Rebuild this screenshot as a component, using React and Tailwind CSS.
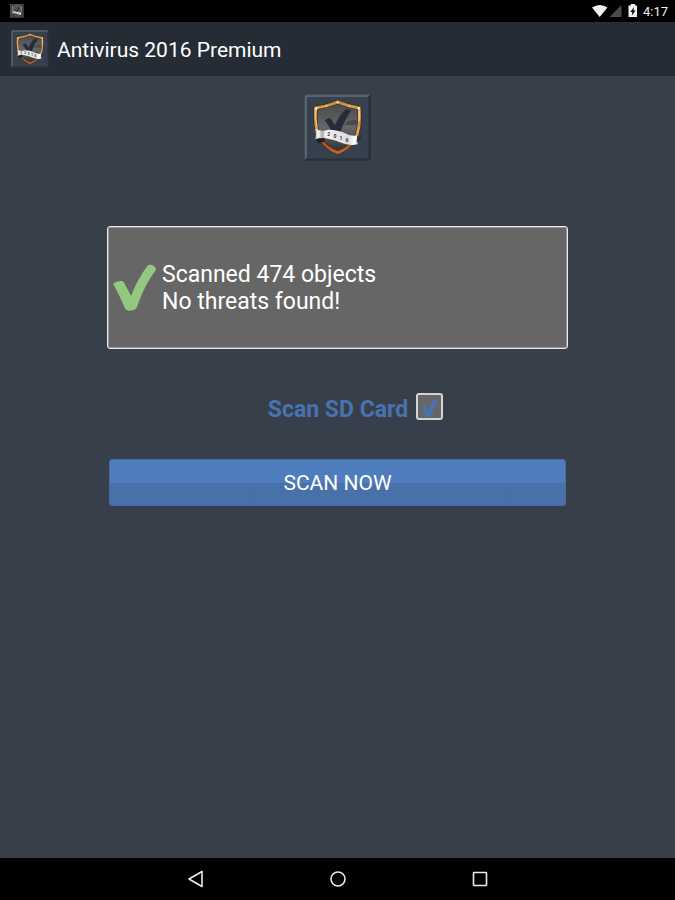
import { useState } from 'react';

export default function App() {
  const [scanSdCard, setScanSdCard] = useState(true);
  const scannedObjects = 474;

  return (
    <div className="flex min-h-screen flex-col bg-[#373f4b] font-[Roboto,sans-serif] text-white">
      <StatusBar />

      {/* Action bar */}
      <header className="flex h-[54px] items-center gap-2 bg-[#252c35] pl-[11px]">
        <AppLogo className="size-[38px]" />
        <h1 className="pt-[2px] text-[21px] leading-6">Antivirus 2016 Premium</h1>
      </header>

      <main className="flex flex-1 flex-col items-center px-[107px] pt-[18px]">
        <AppLogo className="size-[67px]" />

        {/* Last scan result */}
        <section className="mt-[65px] flex h-[123px] w-full items-center gap-[6px] rounded-[3px] border border-[#ebebed] bg-[#666666] pl-[5px] inset-ring inset-ring-white/30">
          <ResultCheck />
          <p className="text-[23px] leading-[27px]">
            Scanned {scannedObjects} objects
            <br />
            No threats found!
          </p>
        </section>

        <div className="mt-11 flex w-full items-start justify-center gap-2 pl-9">
          <label htmlFor="scan-sd" className="pt-[3px] text-[23px] font-bold leading-[27px] text-[#4872b0]">
            Scan SD Card
          </label>
          <span className="relative size-[27px]">
            <input
              id="scan-sd"
              type="checkbox"
              checked={scanSdCard}
              onChange={(e) => setScanSdCard(e.target.checked)}
              className="block size-full appearance-none rounded-[3px] border-2 border-[#d4d4d4] bg-[#666666]"
            />
            {scanSdCard && (
              <svg viewBox="0 0 27 27" className="pointer-events-none absolute inset-0 size-full">
                <path
                  d="M5.4 14.4Q7.4 12.4 9.8 13.4L12.2 18Q14.6 11 18 6.6Q20 5.8 22.2 7.6Q17.8 14.5 15.2 22.6Q14.4 24.6 10.4 24Q8 18.6 5.4 14.4Z"
                  fill="#4872b0"
                />
              </svg>
            )}
          </span>
        </div>

        <div className="mt-9 w-full px-[2px]">
          <button
            type="button"
            className="block h-[47px] w-full rounded-[3px] border border-[#456ca5] bg-linear-to-b from-[#4e7cbc] from-52% to-[#4871aa] to-52% text-[21px] leading-6"
          >
            SCAN NOW
          </button>
        </div>
      </main>

      <NavigationBar />
    </div>
  );
}

function StatusBar() {
  return (
    <div className="flex h-[22px] items-center justify-between bg-black pl-[10px] pr-[7px]">
      <AppLogo className="size-[14px]" />
      <div className="flex items-center">
        {/* Wifi, signal and battery */}
        <svg width="46" height="16" viewBox="0 0 46 16" className="mr-[5px]">
          <path d="M0 4.6Q7.7-.8 15.4 4.6L7.7 14Z" fill="#f2f2f2" />
          <path d="M29.5 2V14H17.5Z" fill="#4a4a4a" />
          <path d="M36.5 2.6h2.2V1h4.2v1.6H45V14h-8.5Z" fill="#f2f2f2" />
          <path d="M42.1 4L38.3 9h2.1l-.7 3.7L43.6 7.5h-2.2Z" fill="#000" />
        </svg>
        <span className="pt-px text-[13px] leading-4 text-[#f2f2f2]">4:17</span>
      </div>
    </div>
  );
}

function NavigationBar() {
  return (
    <nav className="flex h-[42px] items-center justify-center bg-black">
      <NavButton label="Back">
        <path d="M16 2.5V17.5L3 10Z" />
      </NavButton>
      <NavButton label="Home">
        <circle cx="10" cy="10" r="7" />
      </NavButton>
      <NavButton label="Recent apps">
        <rect x="3.5" y="3.5" width="13" height="13" rx="0.5" />
      </NavButton>
    </nav>
  );
}

function NavButton({ label, children }) {
  return (
    <button type="button" aria-label={label} className="flex h-full w-[142px] items-center justify-center">
      <svg width="20" height="20" viewBox="0 0 20 20" fill="none" stroke="#ececec" strokeWidth="1.6" strokeLinejoin="round">
        {children}
      </svg>
    </button>
  );
}

function ResultCheck() {
  return (
    <svg width="43" height="48" viewBox="0 0 43 48">
      <path
        d="M.4 20.5C.2 19 2.5 17.5 6 17.2C9 16.8 10 17 10.8 18.2L18.2 32C22.5 20 29 9 34.5 2C36 .4 38.5.5 41 2.2C43 3.7 43.5 5 42.5 6.6C34 18 29 29 24.2 42.5C23.4 45 21 46.4 17.5 46.6C14 46.9 13 46.3 12 44.3C8.5 36.5 4.5 27.5.4 20.5Z"
        fill="#94c881"
      />
    </svg>
  );
}

// Shield with a dark tick and a ribbon across it
function AppLogo({ className }) {
  return (
    <svg viewBox="0 0 66 66" className={className} aria-hidden="true">
      <defs>
        <linearGradient id="rim" x1="0" y1="0" x2="0" y2="1">
          <stop offset="0" stopColor="#c08a3c" />
          <stop offset="0.15" stopColor="#d9a651" />
          <stop offset="0.35" stopColor="#c48a3d" />
          <stop offset="0.6" stopColor="#e0a560" />
          <stop offset="0.8" stopColor="#a8501f" />
          <stop offset="1" stopColor="#c4652f" />
        </linearGradient>
        <linearGradient id="plate" x1="0" y1="0" x2="0" y2="1">
          <stop offset="0" stopColor="#47484b" />
          <stop offset="0.5" stopColor="#666668" />
          <stop offset="1" stopColor="#303135" />
        </linearGradient>
        <linearGradient id="ribbon" x1="0" y1="0" x2="1" y2="0">
          <stop offset="0" stopColor="#b5b6b7" />
          <stop offset="0.08" stopColor="#f8f8f8" />
          <stop offset="0.17" stopColor="#a9aaab" />
          <stop offset="0.24" stopColor="#f2f2f2" />
          <stop offset="0.75" stopColor="#dcdcdd" />
          <stop offset="0.9" stopColor="#ffffff" />
          <stop offset="1" stopColor="#a5a5a6" />
        </linearGradient>
      </defs>
      {/* Bevelled tile */}
      <rect width="66" height="66" rx="3" fill="#2f3742" />
      <path d="M0.5 65V3Q0.5 0.5 3 0.5H65L62.5 3.5H3.5V62.5Z" fill="#59626f" />
      <path d="M65.5 1V63Q65.5 65.5 63 65.5H1L3 63H63V3Z" fill="#29303b" />
      <rect x="3" y="3" width="60.5" height="60.5" rx="1.5" fill="#37404d" />
      {/* Shield */}
      <path
        d="M33.2 7.8Q43 12.2 54.3 13.6Q56.3 33 50 45Q44 53.8 33.2 57.8Q22.6 53.8 16.6 45Q9.6 33 11.5 13.6Q23.2 12.2 33.2 7.8Z"
        fill="url(#plate)"
        stroke="#33261c"
        strokeWidth="4"
      />
      <path
        d="M33.2 7.8Q43 12.2 54.3 13.6Q56.3 33 50 45Q44 53.8 33.2 57.8Q22.6 53.8 16.6 45Q9.6 33 11.5 13.6Q23.2 12.2 33.2 7.8Z"
        fill="none"
        stroke="url(#rim)"
        strokeWidth="2.8"
      />
      <path d="M11.7 15Q10.9 24 12.7 32" fill="none" stroke="#f6d594" strokeWidth="0.9" />
      <path d="M54.2 17Q54.6 22 54 27" fill="none" stroke="#fbe7bd" strokeWidth="1.1" />
      <g fill="#fff0c9">
        <circle cx="33.2" cy="8.2" r="1.1" />
        <circle cx="12.2" cy="14.2" r="1.2" />
        <circle cx="54" cy="14.2" r="1.2" />
        <circle cx="22" cy="11.9" r="0.7" />
        <circle cx="44.6" cy="11.9" r="0.7" />
      </g>
      <path d="M43 27L52 25V30.5H40Z" fill="#47484c" />
      <path
        d="M20.6 26Q23.6 22.6 26.6 24.6L30.4 30.5Q34.5 21.5 40.5 15.4Q43.4 14 46.4 16.6Q41 24 37 34.5L34.5 39.5L28 38Q25 31.6 20.6 26Z"
        fill="#252b38"
      />
      {/* Ribbon tails */}
      <path d="M17 39L11.8 44.5L14.2 48.8L19.5 47L22 42Z" fill="#1d2025" />
      <path d="M50 42L56 40L55.2 45.5L49 48.5Z" fill="#202328" />
      <path
        d="M10.6 34.2Q17.5 37.4 24 35.2Q33 35.2 41 38.9Q47 42.2 54.8 40.4Q53 45 52.8 49.6Q45.5 51.2 38 48.4Q31 45 23.6 44Q17 42.4 11 44.6Q12.8 39 10.6 34.2Z"
        fill="url(#ribbon)"
      />
      <path d="M52.4 41.2L55.4 40.4Q55.6 43 53.6 46.6L51.8 48.6Z" fill="#35373b" />
      <text
        x="23 29 35 41"
        y="41.8 43.4 45.2 46.8"
        fontFamily="Roboto, sans-serif"
        fontSize="5"
        fontWeight="bold"
        fill="#303237"
      >
        2016
      </text>
    </svg>
  );
}
